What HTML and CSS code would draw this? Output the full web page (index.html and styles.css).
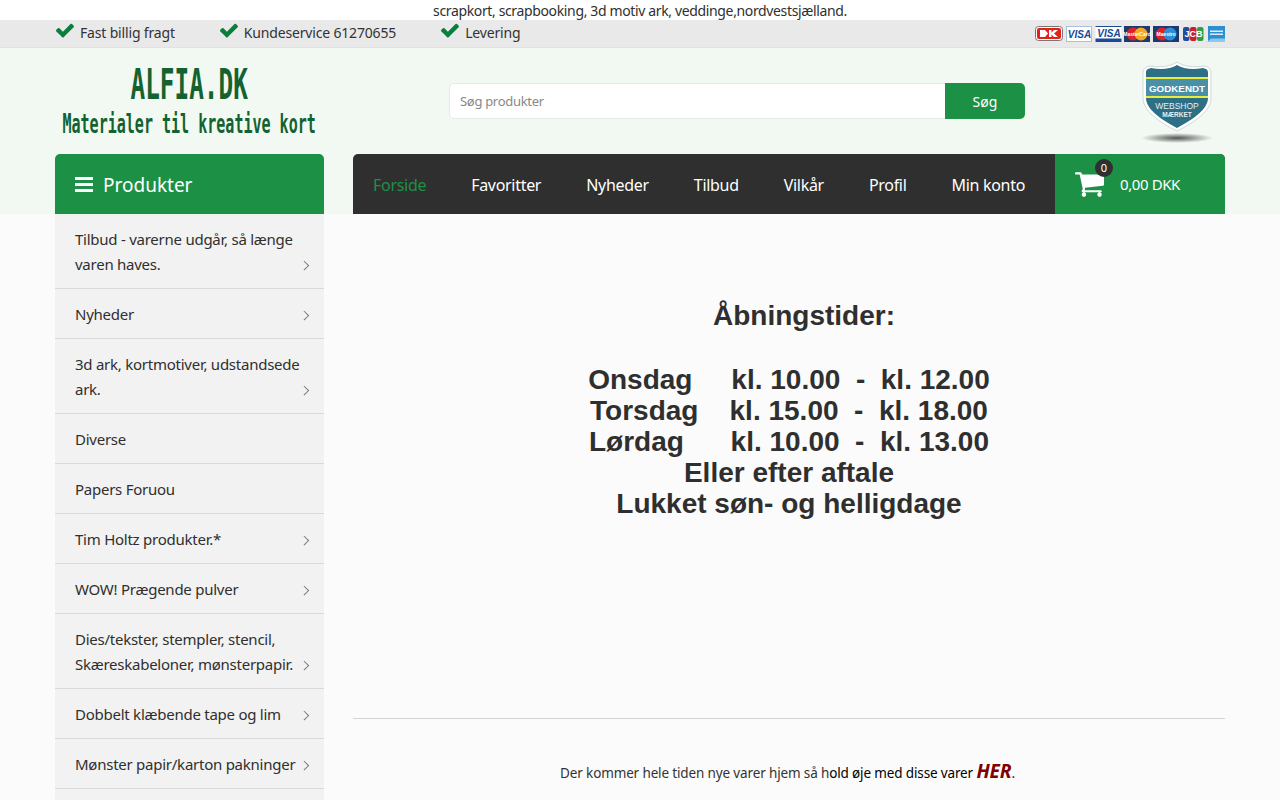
FILE: index.html
```html
<!DOCTYPE html>
<html lang="da">
<head>
  <meta charset="UTF-8">
  <title>Alfia.dk</title>
  <link rel="stylesheet" href="styles.css">
</head>
<body>
  <div class="seo-line">scrapkort, scrapbooking, 3d motiv ark, veddinge,nordvestsjælland.</div>

  <div class="topbar">
    <div class="wrap topbar-inner">
      <ul class="usp">
        <li><svg class="check" viewBox="121 268 1550 1254"><path d="M1671 566q0 40-28 68l-724 724-136 136q-28 28-68 28t-68-28l-136-136-362-362q-28-28-28-68t28-68l136-136q28-28 68-28t68 28l294 295 656-657q28-28 68-28t68 28l136 136q28 28 28 68z"/></svg>Fast billig fragt</li>
        <li><svg class="check" viewBox="121 268 1550 1254"><path d="M1671 566q0 40-28 68l-724 724-136 136q-28 28-68 28t-68-28l-136-136-362-362q-28-28-28-68t28-68l136-136q28-28 68-28t68 28l294 295 656-657q28-28 68-28t68 28l136 136q28 28 28 68z"/></svg>Kundeservice 61270655</li>
        <li><svg class="check" viewBox="121 268 1550 1254"><path d="M1671 566q0 40-28 68l-724 724-136 136q-28 28-68 28t-68-28l-136-136-362-362q-28-28-28-68t28-68l136-136q28-28 68-28t68 28l294 295 656-657q28-28 68-28t68 28l136 136q28 28 28 68z"/></svg>Levering</li>
      </ul>
      <svg class="cards" viewBox="0 0 190 16" width="190" height="16">
        <!-- DK -->
        <rect x=".5" y=".5" width="27" height="14" rx="3" fill="#fff" stroke="#777"/>
        <rect x="2" y="2" width="24" height="11" rx="2" fill="#e2231a"/>
        <path d="M5 4h5l3 3.500-3 3.500H5zM14 4h2.500v2.500L19 4h4l-4 3.500 4 3.500h-4l-2.500-2.500V11H14z" fill="#fff"/>
        <!-- visa -->
        <rect x="31.500" y=".5" width="25" height="15" fill="#fff" stroke="#a9c1e0"/>
        <text x="44.500" y="12" class="card-visa" text-anchor="middle">VISA</text>
        <!-- visa electron -->
        <rect x="60.500" y="0" width="26" height="16" fill="#fff"/>
        <rect x="60.500" y="12.500" width="26" height="3.500" fill="#1a4a96"/>
        <rect x="60.500" y="0" width="26" height="1" fill="#1a4a96"/>
        <text x="74" y="10.500" class="card-visa" text-anchor="middle">VISA</text>
        <!-- mastercard -->
        <rect x="89" y="0" width="26" height="16" fill="#1c3a6e"/>
        <circle cx="98" cy="8" r="6.500" fill="#d9222a"/>
        <circle cx="106" cy="8" r="6.500" fill="#f5a623"/>
        <text x="102" y="10" class="card-tiny" text-anchor="middle">MasterCard</text>
        <!-- maestro -->
        <rect x="118" y="0" width="26" height="16" fill="#1c3a6e"/>
        <circle cx="127" cy="8" r="6.500" fill="#d9222a"/>
        <circle cx="135" cy="8" r="6.500" fill="#2a8fd6"/>
        <text x="131" y="10" class="card-tiny" text-anchor="middle">Maestro</text>
        <!-- jcb -->
        <rect x="148" y="1" width="6.500" height="14" rx="2" fill="#1f4f9c"/>
        <rect x="155" y="1" width="6.500" height="14" rx="2" fill="#c8202f"/>
        <rect x="162" y="1" width="6.500" height="14" rx="2" fill="#2f9e44"/>
        <text x="158.500" y="11" class="card-jcb" text-anchor="middle">JCB</text>
        <!-- amex -->
        <rect x="173" y="0" width="17" height="16" fill="#2d8fd0"/>
        <path d="M172 16l4-3.500h14V16z" fill="#8cc8ee"/>
        <path d="M175 4.500h13V6h-13zM175 7.500h13V9h-13z" fill="#d8eefa"/>
      </svg>
    </div>
  </div>

  <header class="header">
    <div class="wrap header-top">
      <a class="logo">
        <span class="logo-main">ALFIA.DK</span>
        <span class="logo-sub">Materialer til kreative kort</span>
      </a>
      <form class="search">
        <input class="search-input" type="text" placeholder="Søg produkter">
        <button class="search-btn" type="button">Søg</button>
      </form>
      <div class="badge">
        <svg viewBox="0 0 76 88" width="76" height="88">
          <defs>
            <radialGradient id="shade" cx="50%" cy="50%" r="50%">
              <stop offset="0" stop-color="#555"/>
              <stop offset="1" stop-color="#555" stop-opacity="0"/>
            </radialGradient>
          </defs>
          <ellipse cx="38" cy="79" rx="36" ry="5" fill="url(#shade)"/>
          <path d="M38 3c6 4 16 6 27 4 5 1 6 2 7 6v26c0 13-16 24-34 33C20 63 4 52 4 39V13c1-4 2-5 7-6 11 2 21 0 27-4z" fill="#fff" stroke="#cfd8da"/>
          <path d="M38 6c6 4 16 5 26 3 4 1 5 2 5 5v25c0 11-14 21-31 30C21 60 7 50 7 39V14c0-3 1-4 5-5 10 2 20 1 26-3z" fill="#2d6f85"/>
          <rect x="7" y="18" width="62" height="2" fill="#e8ec3a"/>
          <rect x="7" y="20" width="62" height="17" fill="#4a8fa8"/>
          <rect x="7" y="37" width="62" height="2" fill="#e8ec3a"/>
          <text x="38" y="33" class="badge-big" text-anchor="middle">GODKENDT</text>
          <text x="38" y="50" class="badge-small" text-anchor="middle">WEBSHOP</text>
          <text x="38" y="58" class="badge-tiny" text-anchor="middle">MÆRKET</text>
        </svg>
      </div>
    </div>

    <div class="wrap nav-row">
      <div class="cat-head">
        <span class="burger"><i></i><i></i><i></i></span>
        <span class="cat-label">Produkter</span>
      </div>
      <nav class="mainnav">
        <ul class="menu">
          <li class="active">Forside</li>
          <li>Favoritter</li>
          <li>Nyheder</li>
          <li>Tilbud</li>
          <li>Vilkår</li>
          <li>Profil</li>
          <li>Min konto</li>
        </ul>
        <div class="cart">
          <span class="cart-icon">
            <svg viewBox="64 192 1664 1472" width="29" height="26"><path d="M704 1536q0 52-38 90t-90 38-90-38-38-90 38-90 90-38 90 38 38 90zm896 0q0 52-38 90t-90 38-90-38-38-90 38-90 90-38 90 38 38 90zm128-1088v512q0 24-16.500 42.500t-40.500 21.500l-1044 122q13 60 13 70 0 16-24 64h920q26 0 45 19t19 45-19 45-45 19h-1024q-26 0-45-19t-19-45q0-11 8-31.500t16-36 21.500-40 15.500-29.500l-177-823h-204q-26 0-45-19t-19-45 19-45 45-19h256q16 0 28.500 6.500t19.500 15.500 13 24.500 8 26 5.500 29.500 4.500 26h1201q26 0 45 19t19 45z" fill="#fff"/></svg>
            <span class="cart-count">0</span>
          </span>
          0,00 DKK
        </div>
      </nav>
    </div>
  </header>

  <div class="wrap main-row">
    <aside class="sidebar">
      <ul class="cats">
        <li class="has-sub">Tilbud - varerne udgår, så længe varen haves.</li>
        <li class="has-sub">Nyheder</li>
        <li class="has-sub">3d ark, kortmotiver, udstandsede ark.</li>
        <li>Diverse</li>
        <li>Papers Foruou</li>
        <li class="has-sub">Tim Holtz produkter.*</li>
        <li class="has-sub">WOW! Prægende pulver</li>
        <li class="has-sub">Dies/tekster, stempler, stencil, Skæreskabeloner, mønsterpapir.</li>
        <li class="has-sub">Dobbelt klæbende tape og lim</li>
        <li class="has-sub">Mønster papir/karton pakninger</li>
        <li></li>
      </ul>
    </aside>
    <main class="content">
      <div class="hours">
        <h2 class="hours-title">Åbningstider:</h2>
        <p class="hours-text">Onsdag &nbsp; &nbsp; kl. 10.00 &nbsp;-&nbsp; kl. 12.00<br>Torsdag &nbsp; &nbsp;kl. 15.00 &nbsp;-&nbsp; kl. 18.00<br>Lørdag &nbsp; &nbsp; &nbsp;kl. 10.00 &nbsp;-&nbsp; kl. 13.00<br>Eller efter aftale<br>Lukket søn- og helligdage</p>
      </div>
      <hr class="divider">
      <p class="notice">Der kommer hele tiden nye varer hjem så h<span class="dark">old øje med disse varer</span> <a class="her">HER</a>.</p>
    </main>
  </div>
</body>
</html>
```

FILE: styles.css
```css
html, body {
  height: 800px;
  overflow: hidden;
}

body {
  margin: 0;
  background-color: #fbfbfb;
  color: #2f2f2f;
  font-family: "Noto Sans", sans-serif;
  font-size: 14px;
}

ul {
  list-style: none;
  margin: 0;
  padding: 0;
}

.wrap {
  width: 1170px;
  margin: 0 auto;
}

.seo-line {
  background-color: #fff;
  height: 20px;
  line-height: 21px;
  text-align: center;
  font-size: 14px;
  letter-spacing: -0.36px;
}

.topbar {
  background-color: #e9e9e9;
  height: 28px;
  border-bottom: 1px solid #e2e2e2;
  box-sizing: border-box;
}

.topbar-inner {
  display: flex;
  justify-content: space-between;
  align-items: center;
  height: 100%;
}

.usp {
  display: flex;
  gap: 45px;
  padding-left: 1px;
  position: relative;
  top: -1px;
}

.usp li {
  display: flex;
  align-items: center;
  color: #333;
  letter-spacing: -0.17px;
}

.check {
  width: 18px;
  height: 14.500px;
  margin-right: 6px;
  fill: #0b7d3c;
  position: relative;
  top: -2px;
}

.cards {
  display: block;
}

.card-visa {
  font: italic bold 10px "Liberation Sans", sans-serif;
  fill: #1a4a96;
}

.card-tiny {
  font: bold 5px "Liberation Sans", sans-serif;
  fill: #fff;
}

.card-jcb {
  font: bold 9px "Liberation Sans", sans-serif;
  fill: #fff;
}

.header {
  background-color: #f2f9f3;
  height: 166px;
}

.header-top {
  display: flex;
  align-items: flex-start;
  height: 106px;
}

.logo {
  width: 269px;
  flex: none;
  display: flex;
  flex-direction: column;
  align-items: center;
  color: #14622f;
  font-family: "DejaVu Sans Mono", monospace;
  font-weight: bold;
}

.logo-main {
  font-size: 42px;
  line-height: 38px;
  margin-top: 18px;
  transform: scaleX(0.58);
  white-space: nowrap;
}

.logo-sub {
  font-size: 26px;
  line-height: 30px;
  margin-top: 5px;
  transform: scaleX(0.578);
  white-space: nowrap;
}

.search {
  display: flex;
  width: 576px;
  height: 36px;
  margin: 35px 0 0 125px;
}

.search-input {
  flex: 1;
  min-width: 0;
  box-sizing: border-box;
  border: 1px solid #e8e8e8;
  border-right: none;
  border-radius: 5px 0 0 5px;
  background-color: #fff;
  padding: 0 10px;
  font-family: inherit;
  font-size: 13px;
  letter-spacing: -0.3px;
  outline: none;
}

.search-input::placeholder {
  color: #888;
}

.search-btn {
  width: 80px;
  border: none;
  border-radius: 0 5px 5px 0;
  background-color: #1c9146;
  color: #fff;
  font-family: inherit;
  font-size: 14px;
}

.badge {
  margin: 11px 10px 0 auto;
}

.badge svg {
  display: block;
}

.badge-big {
  font: bold 9.800px "Liberation Sans", sans-serif;
  fill: #fff;
}

.badge-small {
  font: 8.500px "Liberation Sans", sans-serif;
  fill: #e4eef1;
}

.badge-tiny {
  font: bold 6.500px "Liberation Sans", sans-serif;
  fill: #e4eef1;
}

.nav-row {
  display: flex;
  height: 60px;
  gap: 29px;
}

.cat-head {
  width: 269px;
  flex: none;
  display: flex;
  align-items: center;
  box-sizing: border-box;
  padding-left: 20px;
  background-color: #1c9146;
  border-radius: 5px 5px 0 0;
  color: #fff;
  font-size: 19px;
}

.cat-label {
  padding-top: 2px;
}

.burger {
  display: flex;
  flex-direction: column;
  gap: 3px;
  margin-right: 10px;
}

.burger i {
  display: block;
  width: 18px;
  height: 3px;
  background-color: #fff;
}

.mainnav {
  flex: 1;
  display: flex;
  justify-content: space-between;
  background-color: #2f2f2f;
  border-radius: 5px 5px 0 0;
}

.menu {
  display: flex;
  align-items: center;
  gap: 45px;
  padding: 2px 0 0 20px;
  color: #fff;
  font-size: 16px;
  letter-spacing: -0.3px;
}

.menu .active {
  color: #1c9146;
}

.cart {
  width: 170px;
  display: flex;
  align-items: center;
  box-sizing: border-box;
  padding-left: 20px;
  background-color: #1c9146;
  border-radius: 0 5px 0 0;
  color: #fff;
  font-size: 15px;
  letter-spacing: -0.4px;
}

.cart-icon {
  position: relative;
  display: block;
  height: 26px;
  margin-right: 16px;
}

.cart-count {
  position: absolute;
  top: -12px;
  left: 20px;
  width: 18px;
  height: 18px;
  border-radius: 50%;
  background-color: #2f2f2f;
  font-size: 11px;
  line-height: 18px;
  letter-spacing: 0;
  text-align: center;
}

.main-row {
  display: flex;
  gap: 29px;
}

.sidebar {
  width: 269px;
  flex: none;
}

.cats li {
  position: relative;
  box-sizing: border-box;
  padding: 13px 20px 11px 20px;
  min-height: 50px;
  background-color: #f2f2f2;
  border-bottom: 1px solid #d9d9d9;
  font-size: 15px;
  line-height: 25px;
  letter-spacing: -0.25px;
}

.cats .has-sub::after {
  content: "";
  position: absolute;
  right: 17px;
  bottom: 20px;
  width: 5.500px;
  height: 5.500px;
  border-top: 1px solid #777;
  border-right: 1px solid #777;
  transform: rotate(45deg);
}

.content {
  flex: 1;
  min-width: 0;
}

.hours {
  height: 504px;
  box-sizing: border-box;
  padding-top: 86px;
  text-align: center;
  font-family: "Liberation Sans", sans-serif;
  font-weight: bold;
  color: #2f2f2f;
}

.hours-title {
  margin: 0 0 32px 30px;
  font-size: 28px;
  line-height: 32px;
}

.hours-text {
  margin: 0;
  font-size: 28px;
  line-height: 31px;
}

.divider {
  margin: 0;
  border: none;
  border-top: 1px solid #d4d4d4;
}

.notice {
  margin: 39px 0 0;
  padding-right: 3px;
  text-align: center;
  font-size: 13.500px;
  letter-spacing: -0.14px;
  color: #333;
}

.dark {
  color: #000;
}

.her {
  color: #800000;
  font-size: 19px;
  font-weight: bold;
  font-style: italic;
}
```
